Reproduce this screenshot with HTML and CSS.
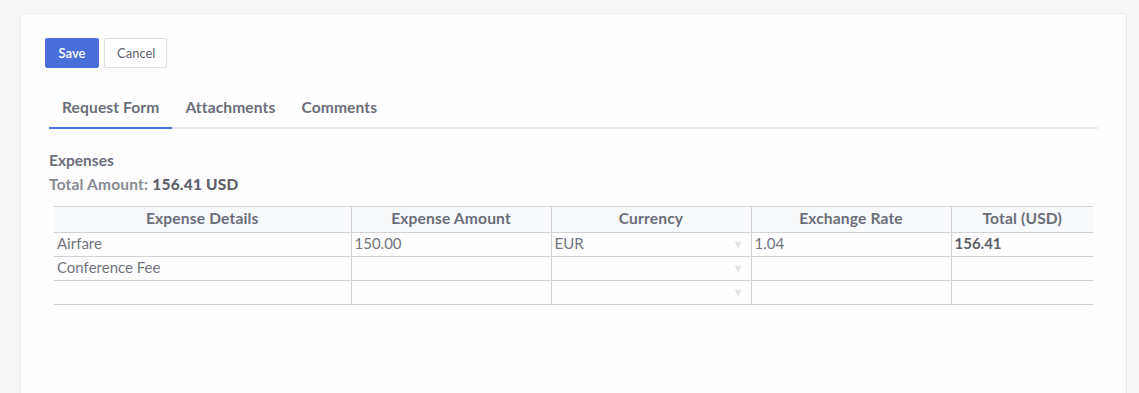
FILE: index.html
```html
<!DOCTYPE html>
<html>
<head>
<meta charset="utf-8">
<link rel="stylesheet" href="styles.css">
</head>
<body>
<div class="card">
  <div class="actions">
    <button class="btn btn-primary">Save</button>
    <button class="btn btn-default">Cancel</button>
  </div>
  <div class="tabs">
    <div class="tab active">Request Form</div>
    <div class="tab">Attachments</div>
    <div class="tab">Comments</div>
  </div>
  <div class="section">
    <div class="section-title">Expenses</div>
    <div class="total">Total Amount: <strong>156.41 USD</strong></div>
    <table class="grid">
      <colgroup>
        <col class="c1"><col class="c2"><col class="c3"><col class="c4"><col class="c5">
      </colgroup>
      <thead>
        <tr><th>Expense Details</th><th>Expense Amount</th><th>Currency</th><th>Exchange Rate</th><th>Total (USD)</th></tr>
      </thead>
      <tbody>
        <tr><td>Airfare</td><td>150.00</td><td class="sel">EUR<span class="arrow">&#9660;</span></td><td>1.04</td><td class="b">156.41</td></tr>
        <tr><td>Conference Fee</td><td></td><td class="sel"><span class="arrow">&#9660;</span></td><td></td><td></td></tr>
        <tr><td></td><td></td><td class="sel"><span class="arrow">&#9660;</span></td><td></td><td></td></tr>
      </tbody>
    </table>
  </div>
</div>
</body>
</html>
```
FILE: styles.css
```css
html, body {
  margin: 0;
  padding: 0;
  background: #f8f8f9;
  font-family: "Lato", "Open Sans", sans-serif;
  color: #6b6e7a;
}
body {
  padding: 13px 12px 0 20px;
}
.card {
  background: #fefefe;
  border: 1px solid #ececee;
  border-bottom: none;
  border-radius: 4px 4px 0 0;
  padding: 24px 28px 60px 24px;
  min-height: 340px;
}
.actions {
  display: flex;
  gap: 5px;
}
.btn {
  height: 30px;
  font-family: inherit;
  font-size: 13px;
  border-radius: 2px;
  padding: 0 12px;
  cursor: pointer;
}
.btn-primary {
  background: #4a6fd8;
  border: 1px solid #4a6fd8;
  color: #fff;
  width: 54px;
  font-weight: 600;
}
.btn-default {
  background: #fff;
  border: 1px solid #dcdde2;
  color: #5f6270;
  width: 63px;
}
.tabs {
  display: flex;
  margin: 20px 0 0 4px;
  border-bottom: 2px solid #ececee;
}
.tab {
  padding: 10px 13px 11px;
  font-size: 15.6px;
  letter-spacing: 0.1px;
  font-weight: 700;
  line-height: 18px;
  color: #6b6e7a;
  margin-bottom: -2px;
  border-bottom: 2px solid transparent;
}
.tab.active {
  border-bottom-color: #4a6fd8;
}
.section {
  padding: 21px 5px 0 4px;
}
.section-title {
  font-size: 15.5px;
  font-weight: 700;
  line-height: 20px;
}
.total {
  font-size: 15.5px;
  letter-spacing: 0.2px;
  font-weight: 700;
  line-height: 20px;
  margin-top: 4px;
  color: #878a93;
}
.total strong {
  color: #5d606b;
}
.grid {
  margin: 12px 0 0 5px;
  width: calc(100% - 5px);
  border-collapse: collapse;
  table-layout: fixed;
  font-size: 15px;
}
.c1 { width: 297px; }
.c2, .c3, .c4 { width: 200px; }
.grid th, .grid td {
  border: 1px solid #d2d2d4;
  padding: 0 3px 2px;
  height: 21px;
  line-height: 21px;
  text-align: left;
}
.grid th:first-child, .grid td:first-child { border-left: none; }
.grid th:last-child, .grid td:last-child { border-right: none; }
.grid th {
  background: #f8f9fb;
  font-weight: 700;
  font-size: 15.6px;
  letter-spacing: 0.15px;
  text-align: center;
  height: 23px;
  color: #6b6e7a;
}
.grid td { color: #71747f; }
.grid td.b { font-weight: 700; color: #5d606b; }
.sel { position: relative; }
.arrow {
  position: absolute;
  right: 7px;
  top: 0;
  font-size: 11px;
  color: #e2e2e4;
}
```
